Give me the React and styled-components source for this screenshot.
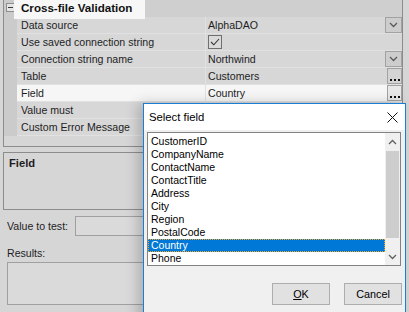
import React from "react";
import styled, { createGlobalStyle } from "styled-components";

const Global = createGlobalStyle`
  html, body { margin: 0; padding: 0; }
  body { background: #d6d6d6; font-family: "Liberation Sans", Arial, sans-serif; }
`;

const Screen = styled.div`
  position: relative;
  width: 409px;
  height: 312px;
  overflow: hidden;
  background: #d6d6d6;
  color: #1d1d1f;
  font-size: 10.6px;
  display: flex;
  flex-direction: column;
`;

const Grid = styled.div`
  margin-left: 3px;
  width: 398px;
  height: 146px;
  border: 1px solid #8c8c8c;
  border-top: none;
  display: flex;
  flex-direction: column;
  background: #d6d6d6;
`;

const Row = styled.div`
  display: grid;
  grid-template-columns: 13px 188px 1px 1fr;
  height: 16px;
  border-bottom: 1px solid ${(p) => (p.$header ? "transparent" : "#e1e1e1")};
  background: ${(p) => (p.$hl ? "#f6f6f6" : "#d7d7d7")};
  align-items: stretch;
`;

const Gutter = styled.div`
  background: #cbcbcb;
  margin-bottom: -1px;
  position: relative;
`;

const MinusBox = styled.div`
  position: absolute;
  left: 2px;
  top: 3px;
  width: 7px;
  height: 7px;
  border: 1px solid #8e8e8e;
  background: #e4e4e4;
  &::after {
    content: "";
    position: absolute;
    left: 1px;
    top: 3px;
    width: 5px;
    height: 1px;
    background: #3a3a3a;
  }
`;

const HeaderLabel = styled.div`
  grid-column: 2 / 5;
  display: flex;
  align-items: center;
  background: #cfcfcf;
`;

const Spot = styled.div`
  margin-left: -3px;
  width: 124px;
  height: 19px;
  align-self: flex-start;
  background: #f7f7f7;
  padding-left: 7px;
  font-weight: bold;
  font-size: 11.6px;
  line-height: 16px;
  color: #111;
  position: relative;
  z-index: 1;
`;

const Name = styled.div`
  padding-left: 4px;
  line-height: 16px;
  white-space: nowrap;
  overflow: hidden;
`;

const Sep = styled.div`
  background: #e1e1e1;
`;

const Value = styled.div`
  display: flex;
  align-items: center;
  justify-content: space-between;
  padding-left: 2px;
  line-height: 16px;
`;

const DropBtn = styled.div`
  width: 15px;
  height: 14px;
  border: 1px solid #a2a2a2;
  background: #cdcdcd;
  display: flex;
  align-items: center;
  justify-content: center;
`;

const DotsBtn = styled(DropBtn)`
  background: ${(p) => (p.$hl ? "#e8e8e8" : "#d4d4d4")};
  align-items: flex-end;
  padding-bottom: 2px;
  box-sizing: border-box;
  height: 16px;
`;

const Dots = styled.div`
  display: flex;
  gap: 2px;
  & > span { width: 2px; height: 2px; background: #111; display: block; }
`;

const Check = styled.div`
  width: 12px;
  height: 12px;
  border: 1px solid #6f6f6f;
  background: #dadada;
  display: flex;
  align-items: center;
  justify-content: center;
`;

const Desc = styled.div`
  margin: 5px 0 0 3px;
  width: 388px;
  height: 48px;
  border: 1px solid #8c8c8c;
  padding: 4px 5px;
  font-weight: bold;
  font-size: 11.2px;
  background: #d6d6d6;
`;

const TestRow = styled.div`
  display: flex;
  align-items: center;
  margin: 6px 0 0 7px;
  gap: 7px;
`;

const Input = styled.div`
  width: 300px;
  height: 18px;
  border: 1px solid #a0a0a0;
  background: #dadada;
`;

const Label = styled.div`
  margin: 11px 0 0 7px;
  line-height: 12px;
`;

const ResultsBox = styled.div`
  margin: 3px 0 0 7px;
  width: 390px;
  height: 41px;
  border: 1px solid #a0a0a0;
  background: #dadada;
`;

const Dialog = styled.div`
  position: absolute;
  left: 143px;
  top: 103px;
  width: 261px;
  height: 230px;
  border: 1px solid #1a7fd4;
  background: #f0f0f0;
  box-shadow: -5px 0 12px rgba(0, 0, 0, 0.2);
  display: flex;
  flex-direction: column;
`;

const TitleBar = styled.div`
  height: 26px;
  background: #ffffff;
  display: flex;
  align-items: center;
  justify-content: space-between;
  padding: 0 7px 0 5px;
  font-size: 11.3px;
  color: #000;
`;

const Body = styled.div`
  padding: 2px 3px 0 3px;
  display: flex;
  flex-direction: column;
`;

const List = styled.div`
  width: 252px;
  height: 132px;
  border: 1px solid #828282;
  background: #fff;
  display: flex;
`;

const Items = styled.div`
  flex: 1;
  padding-top: 2px;
`;

const Item = styled.div`
  height: 13px;
  line-height: 13px;
  padding-left: 3px;
  font-size: 10.5px;
  color: ${(p) => (p.$sel ? "#fff" : "#000")};
  background: ${(p) => (p.$sel ? "#0078d7" : "transparent")};
  outline: ${(p) => (p.$sel ? "1px dotted #f5a623" : "none")};
  outline-offset: -1px;
`;

const Scroll = styled.div`
  width: 15px;
  background: #f0f0f0;
  display: flex;
  flex-direction: column;
`;

const Arrow = styled.div`
  height: 17px;
  display: flex;
  align-items: center;
  justify-content: center;
`;

const Track = styled.div`
  flex: 1;
  display: flex;
  flex-direction: column;
  padding: 1px 1px;
`;

const Thumb = styled.div`
  height: 87px;
  background: #cdcdcd;
`;

const Buttons = styled.div`
  display: flex;
  justify-content: flex-end;
  gap: 14px;
  margin-top: 17px;
`;

const Btn = styled.div`
  width: 56px;
  height: 20px;
  border: 1px solid #adadad;
  background: #e1e1e1;
  display: flex;
  align-items: center;
  justify-content: center;
  font-size: 10.8px;
  color: #000;
`;

const Chevron = ({ up, color = "#5a5a5a" }) => (
  <svg width="9" height="6" viewBox="0 0 9 6">
    <polyline
      points={up ? "1,5 4.5,1.5 8,5" : "1,1 4.5,4.5 8,1"}
      fill="none"
      stroke={color}
      strokeWidth="1.3"
    />
  </svg>
);

const rows = [
  { name: "Data source", value: "AlphaDAO", btn: "drop" },
  { name: "Use saved connection string", check: true },
  { name: "Connection string name", value: "Northwind", btn: "drop" },
  { name: "Table", value: "Customers", btn: "dots" },
  { name: "Field", value: "Country", btn: "dots", hl: true },
  { name: "Value must", value: "" },
  { name: "Custom Error Message", value: "" },
];

const fields = [
  "CustomerID",
  "CompanyName",
  "ContactName",
  "ContactTitle",
  "Address",
  "City",
  "Region",
  "PostalCode",
  "Country",
  "Phone",
];

export default function App() {
  return (
    <>
      <Global />
      <Screen>
        <Grid>
          <Row $header>
            <Gutter>
              <MinusBox />
            </Gutter>
            <HeaderLabel>
              <Spot>Cross-file Validation</Spot>
            </HeaderLabel>
          </Row>
          {rows.map((r) => (
            <Row key={r.name} $hl={r.hl}>
              <Gutter />
              <Name>{r.name}</Name>
              <Sep />
              <Value>
                {r.check ? (
                  <Check>
                    <svg width="10" height="8" viewBox="0 0 10 8">
                      <polyline points="1,4 3.8,6.8 9,1" fill="none" stroke="#333" strokeWidth="1.1" />
                    </svg>
                  </Check>
                ) : (
                  <span>{r.value}</span>
                )}
                {r.btn === "drop" && (
                  <DropBtn>
                    <Chevron />
                  </DropBtn>
                )}
                {r.btn === "dots" && (
                  <DotsBtn $hl={r.hl}>
                    <Dots>
                      <span />
                      <span />
                      <span />
                    </Dots>
                  </DotsBtn>
                )}
              </Value>
            </Row>
          ))}
        </Grid>
        <Desc>Field</Desc>
        <TestRow>
          <span>Value to test:</span>
          <Input />
        </TestRow>
        <Label>Results:</Label>
        <ResultsBox />
        <Dialog>
          <TitleBar>
            <span>Select field</span>
            <svg width="11" height="11" viewBox="0 0 11 11">
              <path d="M0.5 0.5 L10.5 10.5 M10.5 0.5 L0.5 10.5" stroke="#111" strokeWidth="1" />
            </svg>
          </TitleBar>
          <Body>
            <List>
              <Items>
                {fields.map((f) => (
                  <Item key={f} $sel={f === "Country"}>
                    {f}
                  </Item>
                ))}
              </Items>
              <Scroll>
                <Arrow>
                  <Chevron up color="#606060" />
                </Arrow>
                <Track>
                  <Thumb />
                </Track>
                <Arrow>
                  <Chevron color="#606060" />
                </Arrow>
              </Scroll>
            </List>
            <Buttons>
              <Btn>
                <span>
                  <u>O</u>K
                </span>
              </Btn>
              <Btn>Cancel</Btn>
            </Buttons>
          </Body>
        </Dialog>
      </Screen>
    </>
  );
}
